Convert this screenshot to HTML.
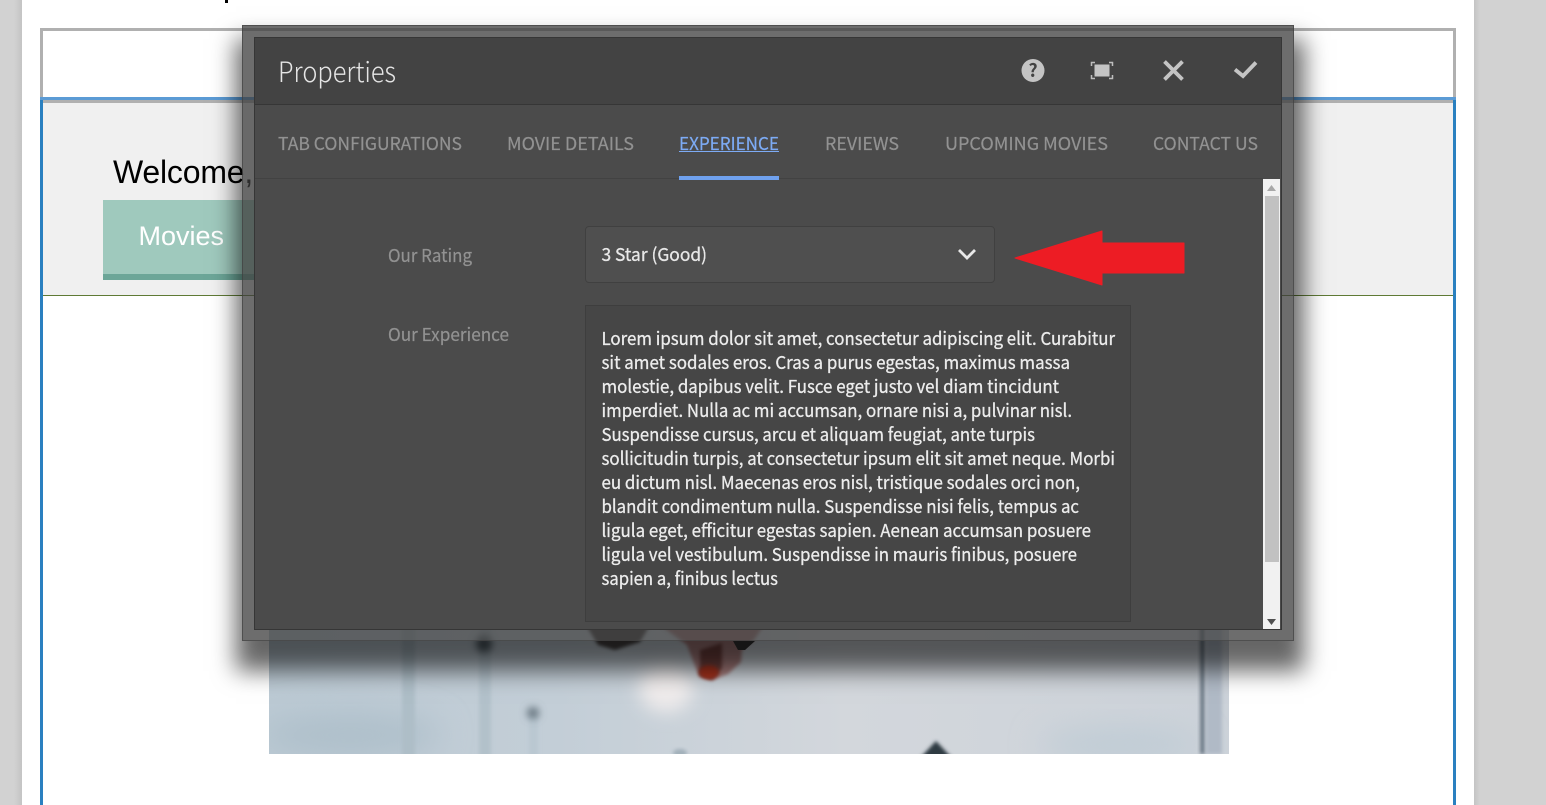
<!DOCTYPE html>
<html><head><meta charset="utf-8"><title>Properties</title>
<style>
html,body{margin:0;padding:0;width:1546px;height:805px;overflow:hidden;background:#d2d2d2}
.a{position:absolute}
svg{position:absolute;left:0;top:0}
</style></head><body>
<div class="a" style="left:14px;top:0;width:8px;height:805px;background:linear-gradient(90deg,#d2d2d2,#c4c4c4)"></div>
<div class="a" style="left:1474px;top:0;width:6px;height:805px;background:linear-gradient(90deg,#c4c4c4,#d2d2d2)"></div>
<div class="a" style="left:22px;top:0;width:1452px;height:805px;background:#fff"></div>
<div class="a" style="left:225px;top:0;width:3px;height:3px;background:#000"></div>
<div class="a" style="left:40px;top:28px;width:1416px;height:3px;background:#b0b0b0"></div>
<div class="a" style="left:40px;top:28px;width:3px;height:70px;background:#b0b0b0"></div>
<div class="a" style="left:1453px;top:28px;width:3px;height:70px;background:#b0b0b0"></div>
<div class="a" style="left:43px;top:103px;width:1410px;height:192px;background:#f0f0f0"></div>
<div class="a" style="left:43px;top:295px;width:1410px;height:1px;background:#5f7a35"></div>
<div class="a" style="left:40px;top:97px;width:1416px;height:3px;background:#5b9bd5"></div>
<div class="a" style="left:43px;top:100px;width:1410px;height:3px;background:#b0b0b0"></div>
<div class="a" style="left:40px;top:100px;width:3px;height:705px;background:#2a80c0"></div>
<div class="a" style="left:1453px;top:100px;width:3px;height:705px;background:#2a80c0"></div>
<div class="a" style="left:113px;top:153px;font:32px/38px 'Liberation Sans',sans-serif;color:#000;letter-spacing:-.2px">Welcome,</div>
<div class="a" style="left:103px;top:200px;width:160px;height:74px;background:#9fc9bd;border-bottom:6px solid #6ca698"></div>
<div class="a" style="left:138.500px;top:220px;font:27px/32px 'Liberation Sans',sans-serif;color:#fff">Movies</div>

<svg width="1546" height="805" viewBox="0 0 1546 805">
<defs>
<linearGradient id="sky" x1="0" y1="0" x2="1" y2="0"><stop offset="0" stop-color="#bccad4"/><stop offset=".3" stop-color="#c3ced7"/><stop offset=".6" stop-color="#d3d7dc"/><stop offset="1" stop-color="#ccd2d9"/></linearGradient>
<filter id="b3" x="-100%" y="-100%" width="300%" height="300%"><feGaussianBlur stdDeviation="4"/></filter>
<filter id="b6" x="-80%" y="-80%" width="260%" height="260%"><feGaussianBlur stdDeviation="9"/></filter>
<filter id="b12" x="-80%" y="-80%" width="260%" height="260%"><feGaussianBlur stdDeviation="16"/></filter>
<filter id="b1" x="-60%" y="-30%" width="220%" height="160%"><feGaussianBlur stdDeviation="1.800"/></filter>
<clipPath id="ph"><rect x="269" y="500" width="960" height="254"/></clipPath>
</defs>
<g clip-path="url(#ph)">
<rect x="269" y="500" width="960" height="254" fill="url(#sky)"/>
<ellipse cx="350" cy="735" rx="90" ry="22" fill="#aebfca" filter="url(#b12)"/>
<ellipse cx="1120" cy="745" rx="80" ry="14" fill="#bccad4" filter="url(#b12)"/>
<rect x="402" y="560" width="13" height="200" fill="#aebec7" filter="url(#b1)"/>
<rect x="479" y="560" width="12" height="200" fill="#b2c1ca" filter="url(#b1)"/>
<rect x="529" y="715" width="9" height="45" fill="#bac8d1" filter="url(#b1)"/>
<circle cx="484" cy="644" r="8" fill="#4e5a62" filter="url(#b3)"/>
<circle cx="533" cy="713" r="6" fill="#66757f" filter="url(#b3)"/>
<ellipse cx="680" cy="753" rx="7" ry="4" fill="#a2b0ba" filter="url(#b1)"/>
<ellipse cx="666" cy="688" rx="27" ry="24" fill="#f0ecec" filter="url(#b6)"/>
<path d="M586 625H650L640 642L615 650L598 645Z" fill="#4a4445" filter="url(#b1)"/>
<path d="M660 625H764L754 640L742 650L741 662L728 674L712 680L699 676L687 645Z" fill="#a87e7e" filter="url(#b1)"/>
<path d="M700 650L722 643L722 668L712 680L700 676Z" fill="#70403c" filter="url(#b1)"/>
<ellipse cx="709" cy="672" rx="10" ry="7" fill="#a6301c" filter="url(#b1)"/>
<path d="M733 641H755L745 650H738Z" fill="#353535"/>
<rect x="1200" y="500" width="5" height="254" fill="#6f7c88" filter="url(#b1)"/>
<rect x="1206" y="500" width="16" height="254" fill="#b0bac6" filter="url(#b1)"/>
<path d="M920 758L936 741L952 758Z" fill="#2d3a42" filter="url(#b1)"/>
</g>
</svg>

<div class="a" style="left:242px;top:25px;width:1052px;height:616px;background:rgba(60,60,60,.75);box-shadow:2px 22px 22px 8px rgba(0,0,0,.6);box-sizing:border-box;border:1px solid rgba(60,60,60,.6)"></div>
<div class="a" style="left:254px;top:37px;width:1028px;height:593px;background:#4b4b4b;box-sizing:border-box;border:1px solid #363636"></div>
<div class="a" style="left:255px;top:38px;width:1026px;height:66px;background:#434343;border-bottom:1px solid #363636"></div>
<div class="a" style="left:255px;top:178px;width:1008px;height:1px;background:#424242"></div>
<div class="a" style="left:679px;top:176px;width:100px;height:4px;background:#6fa1ee"></div>
<div class="a" style="left:585px;top:226px;width:410px;height:57px;box-sizing:border-box;background:#4f4f4f;border:1px solid #404040;border-radius:4px"></div>
<div class="a" style="left:585px;top:305px;width:546px;height:317px;box-sizing:border-box;background:#464646;border:1px solid #3e3e3e"></div>
<div class="a" style="left:1263px;top:179px;width:17px;height:450px;background:#f1f1f1"></div>
<div class="a" style="left:1265px;top:196px;width:14px;height:366px;background:#c1c1c1"></div>

<svg width="1546" height="805" viewBox="0 0 1546 805" style="font-family:'Noto Sans CJK SC','Liberation Sans',sans-serif">
<text x="278" y="82" font-size="28" font-weight="300" fill="#e6e6e6" textLength="118" lengthAdjust="spacingAndGlyphs">Properties</text>
<g font-size="18" fill="#929292" stroke="#929292" stroke-width=".2">
<text x="278" y="150" textLength="184" lengthAdjust="spacingAndGlyphs">TAB CONFIGURATIONS</text>
<text x="507" y="150" textLength="127" lengthAdjust="spacingAndGlyphs">MOVIE DETAILS</text>
<text x="679" y="150" fill="#7dabf5" stroke="#7dabf5" textLength="100" lengthAdjust="spacingAndGlyphs">EXPERIENCE</text>
<text x="825" y="150" textLength="74" lengthAdjust="spacingAndGlyphs">REVIEWS</text>
<text x="945" y="150" textLength="163" lengthAdjust="spacingAndGlyphs">UPCOMING MOVIES</text>
<text x="1153" y="150" textLength="105" lengthAdjust="spacingAndGlyphs">CONTACT US</text>
<text x="388" y="262" textLength="84" lengthAdjust="spacingAndGlyphs">Our Rating</text>
<text x="388" y="341" textLength="121" lengthAdjust="spacingAndGlyphs">Our Experience</text>
</g>
<rect x="679" y="151" width="100" height="1" fill="#7dabf5"/>
<text x="601.500" y="261" font-size="18" fill="#e8e8e8" stroke="#e8e8e8" stroke-width=".3" textLength="105.500" lengthAdjust="spacingAndGlyphs">3 Star (Good)</text>
<g font-size="18" fill="#ececec" stroke="#ececec" stroke-width=".3">
<text x="601.500" y="345" textLength="513.500" lengthAdjust="spacingAndGlyphs">Lorem ipsum dolor sit amet, consectetur adipiscing elit. Curabitur</text>
<text x="601.500" y="369" textLength="468.500" lengthAdjust="spacingAndGlyphs">sit amet sodales eros. Cras a purus egestas, maximus massa</text>
<text x="601.500" y="393" textLength="457.500" lengthAdjust="spacingAndGlyphs">molestie, dapibus velit. Fusce eget justo vel diam tincidunt</text>
<text x="601.500" y="417" textLength="470.500" lengthAdjust="spacingAndGlyphs">imperdiet. Nulla ac mi accumsan, ornare nisi a, pulvinar nisl.</text>
<text x="601.500" y="441" textLength="433.500" lengthAdjust="spacingAndGlyphs">Suspendisse cursus, arcu et aliquam feugiat, ante turpis</text>
<text x="601.500" y="465" textLength="513.500" lengthAdjust="spacingAndGlyphs">sollicitudin turpis, at consectetur ipsum elit sit amet neque. Morbi</text>
<text x="601.500" y="489" textLength="478.500" lengthAdjust="spacingAndGlyphs">eu dictum nisl. Maecenas eros nisl, tristique sodales orci non,</text>
<text x="601.500" y="513" textLength="477.500" lengthAdjust="spacingAndGlyphs">blandit condimentum nulla. Suspendisse nisi felis, tempus ac</text>
<text x="601.500" y="537" textLength="489.500" lengthAdjust="spacingAndGlyphs">ligula eget, efficitur egestas sapien. Aenean accumsan posuere</text>
<text x="601.500" y="561" textLength="475.500" lengthAdjust="spacingAndGlyphs">ligula vel vestibulum. Suspendisse in mauris finibus, posuere</text>
<text x="601.500" y="585" textLength="176.500" lengthAdjust="spacingAndGlyphs">sapien a, finibus lectus</text>
</g>
<circle cx="1033" cy="70.500" r="11.500" fill="#c4c4c4"/>
<text x="1033" y="77" font-size="18" font-weight="700" fill="#434343" text-anchor="middle">?</text>
<path d="M1091.500 66V62.500H1095M1109 62.500H1112.500V66M1112.500 75V78.500H1109M1095 78.500H1091.500V75" fill="none" stroke="#bdbdbd" stroke-width="1.500"/>
<rect x="1094.500" y="64.500" width="15" height="12" fill="#c4c4c4"/>
<path d="M1164.500 61.500L1182.500 79.500M1182.500 61.500L1164.500 79.500" stroke="#c4c4c4" stroke-width="3.800" fill="none"/>
<path d="M1235 69.500L1243 76L1256 62.500" stroke="#c4c4c4" stroke-width="3.800" fill="none"/>
<path d="M959 250L967 258L975 250" stroke="#e8e8e8" stroke-width="2.800" fill="none"/>
<path d="M1015 258L1102 231V243H1184V273H1102V285Z" fill="#ed1c24" stroke="#ed1c24" stroke-width="1" stroke-linejoin="round"/>
<path d="M1271.500 185L1267 191H1276Z" fill="#a8a8a8"/>
<path d="M1267 619H1276L1271.500 625Z" fill="#505050"/>
</svg>
</body></html>
